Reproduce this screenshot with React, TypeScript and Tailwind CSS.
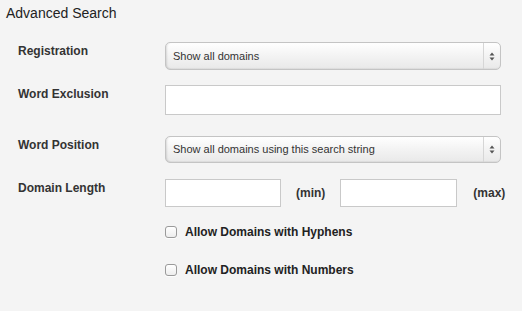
import { type ReactNode } from "react";

const font = { fontFamily: '"Liberation Sans", Arial, Helvetica, sans-serif' };

function Label({ children }: { children: ReactNode }) {
  return <div className="w-[147px] shrink-0 pt-px text-[12px] font-bold leading-4 text-[#333]">{children}</div>;
}

function FakeSelect({ value, h }: { value: string; h: string }) {
  return (
    <div
      className={`flex w-[336px] ${h} items-stretch rounded-[5px] border border-[#c4c4c4] bg-gradient-to-b from-[#ffffff] via-[#f3f3f3] to-[#e9e9e9] shadow-[inset_2px_0_2px_-1px_rgba(0,0,0,0.12),inset_0_-1px_1px_rgba(0,0,0,0.05)]`}
    >
      <div className="flex flex-1 items-center pl-[7px] text-[11px] text-[#333]">{value}</div>
      <div className="flex w-[17px] items-center justify-center border-l border-[#d6d6d6]">
        <svg width="6" height="9" viewBox="0 0 6 9">
          <path d="M3 0.5L5.5 3.5H0.5Z" fill="#555" />
          <path d="M3 8.5L5.5 5.5H0.5Z" fill="#555" />
        </svg>
      </div>
    </div>
  );
}

function TextBox({ w, h }: { w: string; h: string }) {
  return <div className={`${w} ${h} border border-[#c9c9c9] bg-white`} />;
}

function Check({ label, mt }: { label: string; mt: string }) {
  return (
    <div className={`flex items-center pl-[147px] ${mt}`}>
      <div className="h-[12px] w-[12px] rounded-[3px] border border-[#9a9a9a] bg-gradient-to-b from-white to-[#ededed] shadow-[0_1px_0_rgba(255,255,255,0.8)]" />
      <span className="ml-[8px] text-[12px] font-bold leading-4 text-[#222]">{label}</span>
    </div>
  );
}

export default function App() {
  return (
    <div className="h-[311px] w-[522px] overflow-hidden bg-[#f4f4f4]" style={font}>
      <div className="pl-[6px] pt-[3px] text-[14px] leading-5 text-[#222]">Advanced Search</div>

      <div className="pl-[18px]">
        <div className="mt-[19px] flex items-start">
          <Label>Registration</Label>
          <FakeSelect value="Show all domains" h="h-[28px]" />
        </div>

        <div className="mt-[15px] flex items-start">
          <Label>Word Exclusion</Label>
          <TextBox w="w-[336px]" h="h-[30px]" />
        </div>

        <div className="mt-[21px] flex items-start">
          <Label>Word Position</Label>
          <FakeSelect value="Show all domains using this search string" h="h-[27px]" />
        </div>

        <div className="mt-[16px] flex items-start">
          <Label>Domain Length</Label>
          <TextBox w="w-[116px]" h="h-[28px]" />
          <span className="ml-[15px] mt-[6px] text-[12px] font-bold leading-4 text-[#333]">(min)</span>
          <div className="ml-[15px]">
            <TextBox w="w-[117px]" h="h-[28px]" />
          </div>
          <span className="ml-[16px] mt-[6px] text-[12px] font-bold leading-4 text-[#333]">(max)</span>
        </div>

        <Check label="Allow Domains with Hyphens" mt="mt-[17px]" />
        <Check label="Allow Domains with Numbers" mt="mt-[22px]" />
      </div>
    </div>
  );
}
